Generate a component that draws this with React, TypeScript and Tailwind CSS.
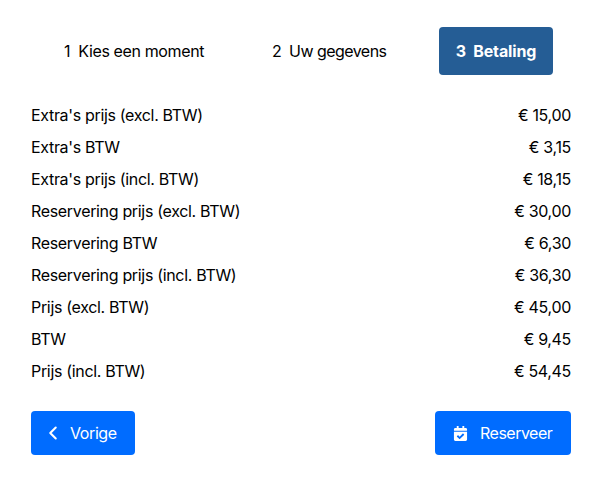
import React from "react";
import { FaCalendarCheck } from "react-icons/fa";
import { ChevronLeft } from "lucide-react";

const rows = [
  ["Extra's prijs (excl. BTW)", "€ 15,00"],
  ["Extra's BTW", "€ 3,15"],
  ["Extra's prijs (incl. BTW)", "€ 18,15"],
  ["Reservering prijs (excl. BTW)", "€ 30,00"],
  ["Reservering BTW", "€ 6,30"],
  ["Reservering prijs (incl. BTW)", "€ 36,30"],
  ["Prijs (excl. BTW)", "€ 45,00"],
  ["BTW", "€ 9,45"],
  ["Prijs (incl. BTW)", "€ 54,45"],
];

const App: React.FC = () => {
  return (
    <div className="w-[603px] h-[482px] bg-white text-black font-['Inter',sans-serif] text-base tracking-[-0.33px] pl-[31px] pr-[32px] pt-[27px] overflow-hidden">
      {/* Steps */}
      <div className="flex h-12 items-center">
        <div className="ml-[33px] w-[208px] tracking-[-0.38px]">1&nbsp; Kies een moment</div>
        <div className="w-[167px] tracking-[-0.55px]">2&nbsp; Uw gegevens</div>
        <div className="flex h-12 w-[114px] items-center justify-center rounded bg-[#255d95] font-bold tracking-[-0.15px] text-white">
          3&nbsp; Betaling
        </div>
      </div>

      {/* Prices */}
      <div className="mt-6">
        {rows.map(([label, price]) => (
          <div key={label} className="flex h-8 items-center justify-between">
            <span>{label}</span>
            <span>{price}</span>
          </div>
        ))}
      </div>

      {/* Buttons */}
      <div className="mt-6 flex justify-between">
        <button className="flex h-11 w-[104px] items-center rounded bg-[#006cff] pl-[11px] text-white">
          <ChevronLeft size={22} strokeWidth={2.25} />
          <span className="ml-[6px] tracking-[-0.4px]">Vorige</span>
        </button>
        <button className="flex h-11 w-[136px] items-center rounded bg-[#006cff] pl-[18px] text-white">
          <FaCalendarCheck size={15} />
          <span className="ml-[12px] tracking-[-0.5px]">Reserveer</span>
        </button>
      </div>
    </div>
  );
};

export default App;
